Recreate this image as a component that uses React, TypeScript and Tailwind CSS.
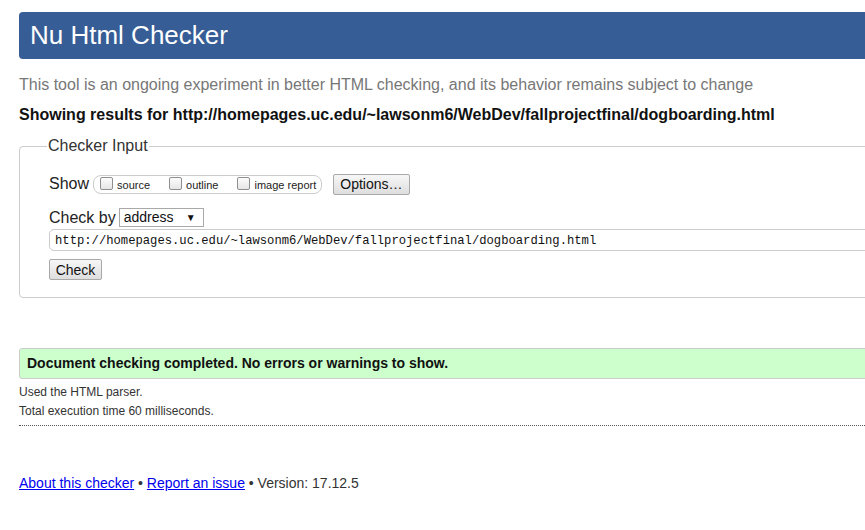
import React from "react";

const Cb = ({ label }: { label: string }) => (
  <span className="flex items-center mr-[19px] last:mr-0">
    <span className="inline-block w-[13px] h-[13px] border border-[#8f8f8f] rounded-[2px] bg-gradient-to-b from-[#fcfcfc] to-[#e6e6e6] mr-[4px] -mt-[3px]" />
    <span className="text-[11px] text-[#222]">{label}</span>
  </span>
);

export default function App() {
  return (
    <div
      className="w-[865px] h-[530px] overflow-hidden bg-white text-[#222]"
      style={{ fontFamily: '"Liberation Sans", Arial, sans-serif' }}
    >
      <div className="ml-[19px] w-[900px] pt-[12px]">
        <div className="h-[47px] bg-[#365d95] rounded-[4px] text-white text-[26px] leading-[47px] pl-[11px]">
          Nu Html Checker
        </div>
        <p className="mt-[17px] text-[16px] leading-[18px] text-[#777]">
          This tool is an ongoing experiment in better HTML checking, and its behavior remains subject to change
        </p>
        <p className="mt-[12px] text-[16px] leading-[18px] font-bold text-[#111]">
          Showing results for http://homepages.uc.edu/~lawsonm6/WebDev/fallprojectfinal/dogboarding.html
        </p>
        <div className="relative mt-[22px] border border-[#ccc] rounded-[4px] h-[152px] pl-[29px] pt-[27px]">
          <span className="absolute left-[27px] -top-[10px] bg-white px-[1px] text-[16px] leading-[18px] text-[#333]">
            Checker Input
          </span>
          <div className="flex items-center h-[20px]">
            <span className="text-[16px] text-[#222] mr-[4px]">Show</span>
            <div className="flex items-center h-[19px] border border-[#ccc] rounded-[8px] pl-[6px] pr-[5px] pt-[2px]">
              <Cb label="source" />
              <Cb label="outline" />
              <Cb label="image report" />
            </div>
            <button className="ml-[11px] h-[21px] px-[6px] border border-[#a9a9a9] rounded-[2px] bg-gradient-to-b from-[#f7f7f7] to-[#dedede] text-[14px] leading-[18px] text-[#111]">
              Options…
            </button>
          </div>
          <div className="flex items-center mt-[14px] h-[19px]">
            <span className="text-[16px] text-[#222] mr-[3px]">Check by</span>
            <div className="flex items-center justify-between w-[85px] h-[19px] border border-[#a9a9a9] pl-[4px] pr-[7px] text-[14px] text-[#111] bg-white">
              <span>address</span>
              <span className="text-[10px]">▼</span>
            </div>
          </div>
          <div
            className="mt-[2px] h-[22px] border border-[#ccc] rounded-l-[5px] pl-[5px] pt-[2px] flex items-center text-[12.2px] text-[#111]"
            style={{ fontFamily: '"Liberation Mono", monospace' }}
          >
            http://homepages.uc.edu/~lawsonm6/WebDev/fallprojectfinal/dogboarding.html
          </div>
          <button className="mt-[8px] h-[21px] w-[53px] border border-[#a9a9a9] rounded-[2px] bg-gradient-to-b from-[#f7f7f7] to-[#dedede] text-[14px] leading-[18px] text-[#111]">
            Check
          </button>
        </div>
        <div className="mt-[50px] h-[31px] bg-[#ccffcc] border border-[#ccc] rounded-l-[3px] pl-[7px] flex items-center text-[14px] font-bold text-[#111]">
          Document checking completed. No errors or warnings to show.
        </div>
        <p className="mt-[6px] text-[12px] leading-[14px] text-[#333]">Used the HTML parser.</p>
        <p className="mt-[5px] text-[12px] leading-[14px] text-[#333]">Total execution time 60 milliseconds.</p>
        <div className="mt-[7px] border-t border-dotted border-[#555]" />
        <p className="mt-[49px] text-[14px] leading-[16px] text-[#333]">
          <a className="text-[#0000ee] underline" href="#">About this checker</a>
          {" • "}
          <a className="text-[#0000ee] underline" href="#">Report an issue</a>
          {" • Version: 17.12.5"}
        </p>
      </div>
    </div>
  );
}
